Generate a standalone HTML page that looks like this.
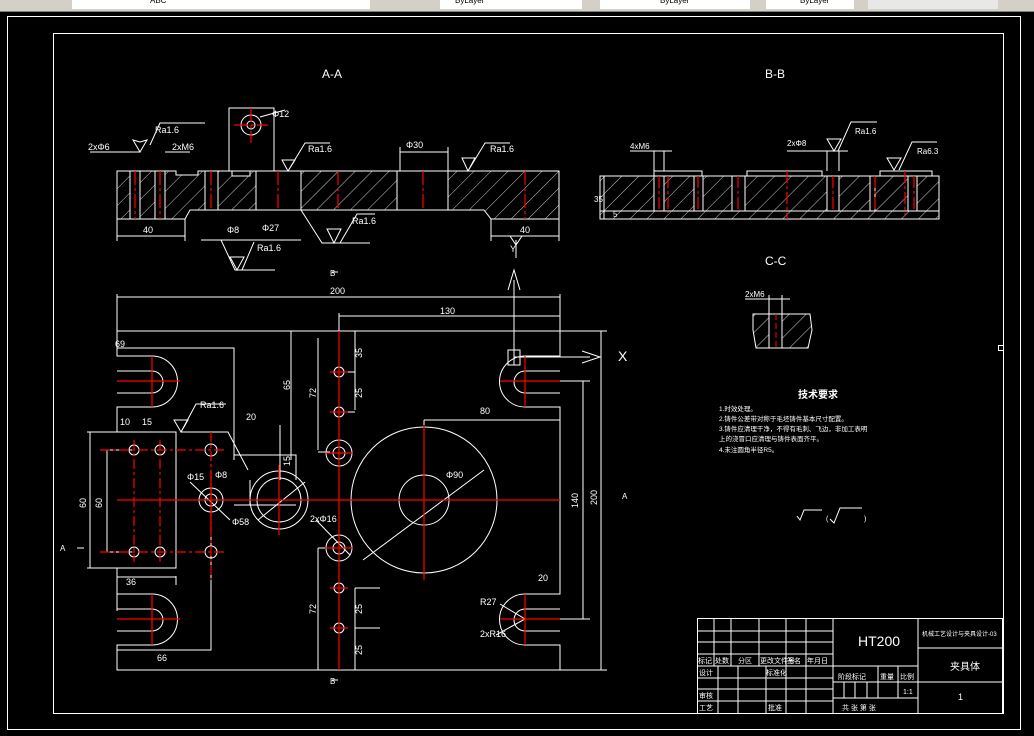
<!DOCTYPE html>
<html><head><meta charset="utf-8"><style>
html,body{margin:0;padding:0;background:#000;width:1034px;height:736px;overflow:hidden}
svg{display:block}
text{font-family:"Liberation Sans","Noto Sans CJK SC",sans-serif;fill:#fff}
</style></head><body>
<svg width="1034" height="736" viewBox="0 0 1034 736" xmlns="http://www.w3.org/2000/svg">
<defs>
<pattern id="h" width="12" height="12" patternUnits="userSpaceOnUse" patternTransform="rotate(45)">
<line x1="0" y1="0" x2="0" y2="12" stroke="#fff" stroke-width="0.8"/></pattern>
</defs>
<!-- toolbar -->
<rect x="0" y="0" width="1034" height="12" fill="#d4d0c8"/>
<rect x="0" y="11" width="1034" height="1" fill="#808080"/>
<rect x="72" y="0" width="298" height="9" fill="#fff"/>
<rect x="440" y="0" width="142" height="9" fill="#fff"/>
<rect x="600" y="0" width="150" height="9" fill="#fff"/>
<rect x="766" y="0" width="88" height="9" fill="#fff"/>
<rect x="868" y="0" width="130" height="9" fill="#e8e8e8"/>
<text x="150" y="3" font-size="8" style="fill:#000">ABC</text>
<text x="455" y="3" font-size="8" style="fill:#000">ByLayer</text>
<text x="660" y="3" font-size="8" style="fill:#000">ByLayer</text>
<text x="800" y="3" font-size="8" style="fill:#000">ByLayer</text>
<g fill="none" stroke="#fff" stroke-width="1">
<rect x="7.5" y="16.5" width="1013" height="713"/>
<rect x="53.5" y="33.5" width="950" height="680"/>
<rect x="998.5" y="345.5" width="5" height="5"/>
</g>
<!-- A-A section -->
<text x="322" y="78" font-size="12">A-A</text>
<text x="765" y="78" font-size="12">B-B</text>
<text x="765" y="265" font-size="12">C-C</text>
<path d="M117,171 L176,171 L176,175 L198,175 L198,171 L232,171 L232,176 L250,176 L250,171 L559,171 L559,219 L491,219 L484,210 L190,210 L185,219 L117,219 Z" fill="url(#h)" stroke="#fff"/>
<g stroke="#fff" fill="none">
<rect x="130" y="171" width="10" height="48" fill="#000"/>
<rect x="155" y="171" width="10" height="48" fill="#000"/>
<rect x="205" y="171" width="13" height="39" fill="#000"/>
<rect x="256" y="171" width="45" height="39" fill="#000"/>
<rect x="397" y="171" width="51" height="39" fill="#000"/>
<rect x="229" y="108" width="45" height="63" fill="#000"/>
<circle cx="251" cy="125" r="10"/><circle cx="251" cy="125" r="4"/>
<path d="M117,219 V241 M185,219 V241 M117,236 H185 M491,219 V241 M559,219 V241 M491,236 H559"/>
<path d="M90,152 H140 M165,152 H190 M140,142 L133,140 L140,152 L147,140 Z M150,145 L160,123 H205"/>
<path d="M282,160 L295,160 L288,171 Z M288,171 L305,143 H330"/>
<path d="M462,158 L475,158 L468,171 Z M468,171 L485,143 H510"/>
<path d="M400,152 H448 M400,147 V171 M448,147 V171"/>
<path d="M201,240 H265 M256,240 H301 M221,240 L235,270 H275 M230,257 L244,257 L237,270 Z M242,270 L254,242"/>
<path d="M301,210 L322,243 H370 M327,229 L341,229 L334,243 Z M340,243 L357,214 H375"/>
<path d="M516,240 V258 M510,236 L516,245 L522,236"/>
<path d="M260,117 L285,110"/>
</g>
<g stroke="#f00" stroke-width="1.2" stroke-dasharray="14 3 3 3">
<path d="M135,171 V219 M160,171 V219 M211,171 V210 M278,171 V210 M338,171 V210 M423,171 V210 M525,171 V219 M251,108 V143 M234,125 H268"/>
</g>
<g font-size="9">
<text x="88" y="150">2xΦ6</text><text x="155" y="133">Ra1.6</text><text x="172" y="150">2xM6</text>
<text x="272" y="117">Φ12</text><text x="308" y="152">Ra1.6</text><text x="406" y="148">Φ30</text>
<text x="490" y="152">Ra1.6</text><text x="143" y="233">40</text><text x="520" y="233">40</text>
<text x="227" y="233">Φ8</text><text x="262" y="231">Φ27</text><text x="257" y="251">Ra1.6</text>
<text x="352" y="224">Ra1.6</text><text x="510" y="252">Y</text>
</g>
<!-- B-B -->
<path d="M600,176 H939 V219 H600 Z" fill="url(#h)" stroke="#fff"/>
<g stroke="#fff" fill="none">
<path d="M600,211 H939 M600,176 H939"/>
<rect x="654" y="171" width="48" height="5"/><rect x="747" y="171" width="75" height="5"/>
<rect x="880" y="171" width="52" height="5"/>
<rect x="654" y="176" width="10" height="35" fill="#000"/><rect x="694" y="176" width="9" height="35" fill="#000"/>
<rect x="732" y="176" width="13" height="35" fill="#000"/><rect x="827" y="176" width="12" height="35" fill="#000"/>
<rect x="870" y="176" width="5" height="35" fill="#000"/><rect x="908" y="176" width="9" height="35" fill="#000"/>
<path d="M630,151 H672 M654,151 V171 M664,151 V171"/>
<path d="M787,151 H848 M827,151 V171 M839,151 V171 M827,139 L841,139 L834,151 Z M838,151 L851,122 H877"/>
<path d="M887,158 L901,158 L894,170 Z M899,170 L912,142 H937"/>
<path d="M604,176 V219"/>
</g>
<g stroke="#f00" stroke-width="1.2" stroke-dasharray="12 3 3 3"><path d="M659,176 V211 M668,176 V213 M698,176 V211 M738,176 V211 M787,171 V219 M833,176 V211 M875,176 V211 M905,171 V215 M914,176 V211"/></g>
<g font-size="8"><text x="630" y="149">4xM6</text><text x="787" y="146">2xΦ8</text><text x="855" y="134">Ra1.6</text><text x="917" y="154">Ra6.3</text><text x="594" y="202">35</text><text x="613" y="217">5</text></g>
<!-- C-C -->
<path d="M753,314 H810 L812,330 L808,348 H756 L753,330 Z" fill="url(#h)" stroke="#fff"/>
<g stroke="#fff" fill="none"><rect x="769" y="314" width="13" height="34" fill="#000"/><path d="M745,299 H790 M769,295 V314 M782,295 V314"/></g>
<path d="M776,314 V348" stroke="#f00" stroke-dasharray="6 3"/>
<text x="745" y="297" font-size="8">2xM6</text>
<!-- Tech req -->
<text x="798" y="398" font-size="10" font-weight="bold">技术要求</text>
<g font-size="6.5"><text x="719" y="411">1.时效处理。</text><text x="719" y="421">2.铸件公差带对称于毛坯铸件基本尺寸配置。</text>
<text x="719" y="431">3.铸件应清理干净，不得有毛刺、飞边，非加工表明</text><text x="719" y="441">上的浇冒口应清理与铸件表面齐平。</text><text x="719" y="452">4.未注圆角半径R5。</text></g>
<g stroke="#fff" fill="none"><path d="M797,516 L800,520 L804,510 H822 M830,519 L834,523 L840,508 H862"/></g>
<text x="826" y="521" font-size="7">(</text><text x="864" y="521" font-size="7">)</text>
<!-- main plan view -->
<g stroke="#fff" fill="none">
<path d="M117,331 H560 V356 H525 A25,25 0 0,0 525,407 H560 V594 H525 A25,25 0 0,0 525,645 H560 V670 H117 V645 H152 A25,25 0 0,0 152,594 H117 V568 H176 V432 H117 V407 H152 A25,25 0 0,0 152,356 H117 Z"/>
<path d="M117,371 H152 A11,11 0 0,1 152,393 H117 M117,609 H152 A11,11 0 0,1 152,631 H117 M560,371 H525 A11,11 0 0,0 525,393 H560 M560,609 H525 A11,11 0 0,0 525,631 H560"/>
<path d="M117,294 V331 M560,294 V331 M117,297 H560 M339,313 V331 M339,316 H560 M560,331 H607 M560,670 H607 M601,331 V670 M560,381 H590 M560,619 H590 M583,381 V619"/>
<path d="M117,348 H234 V460 M117,342 V350 M234,455 H296 V480 M234,505 H296 M280,425 V480 M250,480 V505 H296"/>
<path d="M87,432 H176 M90,432 V568 M87,568 H176 M105,450 H134 M105,552 H134 M107,450 V552 M117,577 H176 M117,611 V582 M176,576 V585 M117,650 H211 V507"/>
<path d="M291,331 V460 M318,338 V450 M318,452 H330 M339,331 H355 M355,331 V410 M339,412 H355 M339,372 H355 M318,548 H330 M318,548 V670 M355,588 H380 M355,628 H380 M355,588 V670"/>
<path d="M424,428 V420 M424,420 H560"/>
<circle cx="424" cy="500" r="73"/><circle cx="424" cy="500" r="25"/>
<circle cx="279" cy="500" r="29"/><circle cx="279" cy="500" r="22"/>
<circle cx="211" cy="500" r="12"/><circle cx="211" cy="500" r="6"/>
<circle cx="339" cy="453" r="13"/><circle cx="339" cy="453" r="6"/>
<circle cx="339" cy="548" r="13"/><circle cx="339" cy="548" r="6"/>
<circle cx="339" cy="372" r="5"/><circle cx="339" cy="412" r="5"/><circle cx="339" cy="588" r="5"/><circle cx="339" cy="628" r="5"/>
<circle cx="134" cy="450" r="5"/><circle cx="160" cy="450" r="5"/><circle cx="211" cy="450" r="6"/>
<circle cx="134" cy="552" r="5"/><circle cx="160" cy="552" r="5"/><circle cx="211" cy="552" r="6"/>
<path d="M363,560 L484,470 M258,520 L305,482 M190,482 L230,520 M316,520 L350,555 M500,604 L525,619 L496,635"/>
<path d="M174,420 L188,420 L181,432 Z M181,432 L196,404 H226 M181,432 H228 L248,470"/>
<path d="M514,365 V280 M508,290 L514,270 L520,290 M508,350 H520 V365 H508 Z M514,357 H590 M582,351 L600,357 L582,363"/>
<path d="M332,272 H338 M332,680 H338 M77,548 H84"/>
</g>
<g stroke="#f00" stroke-width="1.2">
<path d="M117,500 H560 M339,331 V670 M424,425 V580 M279,465 V535 M211,470 V530 M152,356 V407 M152,594 V645 M525,356 V407 M525,594 V645 M117,381 H180 M117,619 H180 M500,381 H560 M500,619 H560 M330,372 H348 M330,412 H348 M330,588 H348 M330,628 H348 M325,453 H353 M325,548 H353"/>
<path d="M134,440 V562 M160,440 V562 M211,432 V580 M100,450 H225 M100,552 H225" stroke-dasharray="10 3 3 3"/>
</g>
<g font-size="9">
<text x="330" y="294">200</text><text x="440" y="314">130</text><text x="115" y="347">69</text>
<text x="200" y="408">Ra1.6</text><text x="120" y="425">10</text><text x="142" y="425">15</text><text x="246" y="420">20</text>
<text x="0" y="0" transform="translate(290,466) rotate(-90)">15</text><text x="126" y="585">36</text><text x="157" y="661">66</text>
<text x="480" y="414">80</text><text x="538" y="581">20</text><text x="618" y="361" font-size="14">X</text>
<text x="622" y="499" font-size="8">A</text><text x="60" y="551" font-size="8">A</text><text x="330" y="276" font-size="8">B</text><text x="330" y="684" font-size="8">B</text>
<text x="187" y="480">Φ15</text><text x="215" y="478">Φ8</text><text x="232" y="525">Φ58</text><text x="310" y="522">2xΦ16</text>
<text x="446" y="478">Φ90</text><text x="480" y="605">R27</text><text x="480" y="637">2xR16</text>
<text x="0" y="0" transform="translate(597,505) rotate(-90)">200</text>
<text x="0" y="0" transform="translate(578,508) rotate(-90)">140</text>
<text x="0" y="0" transform="translate(290,390) rotate(-90)">65</text>
<text x="0" y="0" transform="translate(316,398) rotate(-90)">72</text>
<text x="0" y="0" transform="translate(316,614) rotate(-90)">72</text>
<text x="0" y="0" transform="translate(362,358) rotate(-90)">35</text>
<text x="0" y="0" transform="translate(362,398) rotate(-90)">25</text>
<text x="0" y="0" transform="translate(362,614) rotate(-90)">25</text>
<text x="0" y="0" transform="translate(362,655) rotate(-90)">25</text>
<text x="0" y="0" transform="translate(86,508) rotate(-90)">60</text>
<text x="0" y="0" transform="translate(102,508) rotate(-90)">60</text>
</g>
<!-- title block -->
<g stroke="#fff" fill="none">
<rect x="697.5" y="618.5" width="305" height="95"/>
<path d="M697,631 H833 M697,642 H833 M697,654 H833 M697,666 H918 M697,678 H833 M697,689 H833 M697,701 H833 M833,618 V713 M918,618 V713 M918,648 H1003 M918,682 H1003 M833,682 H918 M833,698 H918"/>
<path d="M714,618 V666 M731,618 V666 M759,618 V666 M786,618 V666 M806,618 V666 M718,666 V713 M738,666 V713 M766,666 V713 M786,666 V713 M806,666 V713"/>
<path d="M878,666 V698 M898,666 V698 M844,682 V698 M855,682 V698 M867,682 V698"/>
</g>
<g font-size="7"><text x="698" y="663">标记</text><text x="715" y="663">处数</text><text x="738" y="663">分区</text><text x="760" y="663">更改文件号</text><text x="787" y="663">签名</text><text x="807" y="663">年月日</text>
<text x="699" y="675">设计</text><text x="766" y="675">标准化</text><text x="699" y="698">审核</text><text x="699" y="710">工艺</text><text x="768" y="710">批准</text>
<text x="838" y="679">阶段标记</text><text x="880" y="679">重量</text><text x="900" y="679">比例</text><text x="903" y="694">1:1</text>
<text x="842" y="710">共 张 第 张</text><text x="922" y="636" font-size="6">机械工艺设计与夹具设计-03</text></g>
<text x="858" y="646" font-size="14">HT200</text>
<text x="950" y="670" font-size="10">夹具体</text>
<text x="958" y="700" font-size="9">1</text>
</svg>
</body></html>
